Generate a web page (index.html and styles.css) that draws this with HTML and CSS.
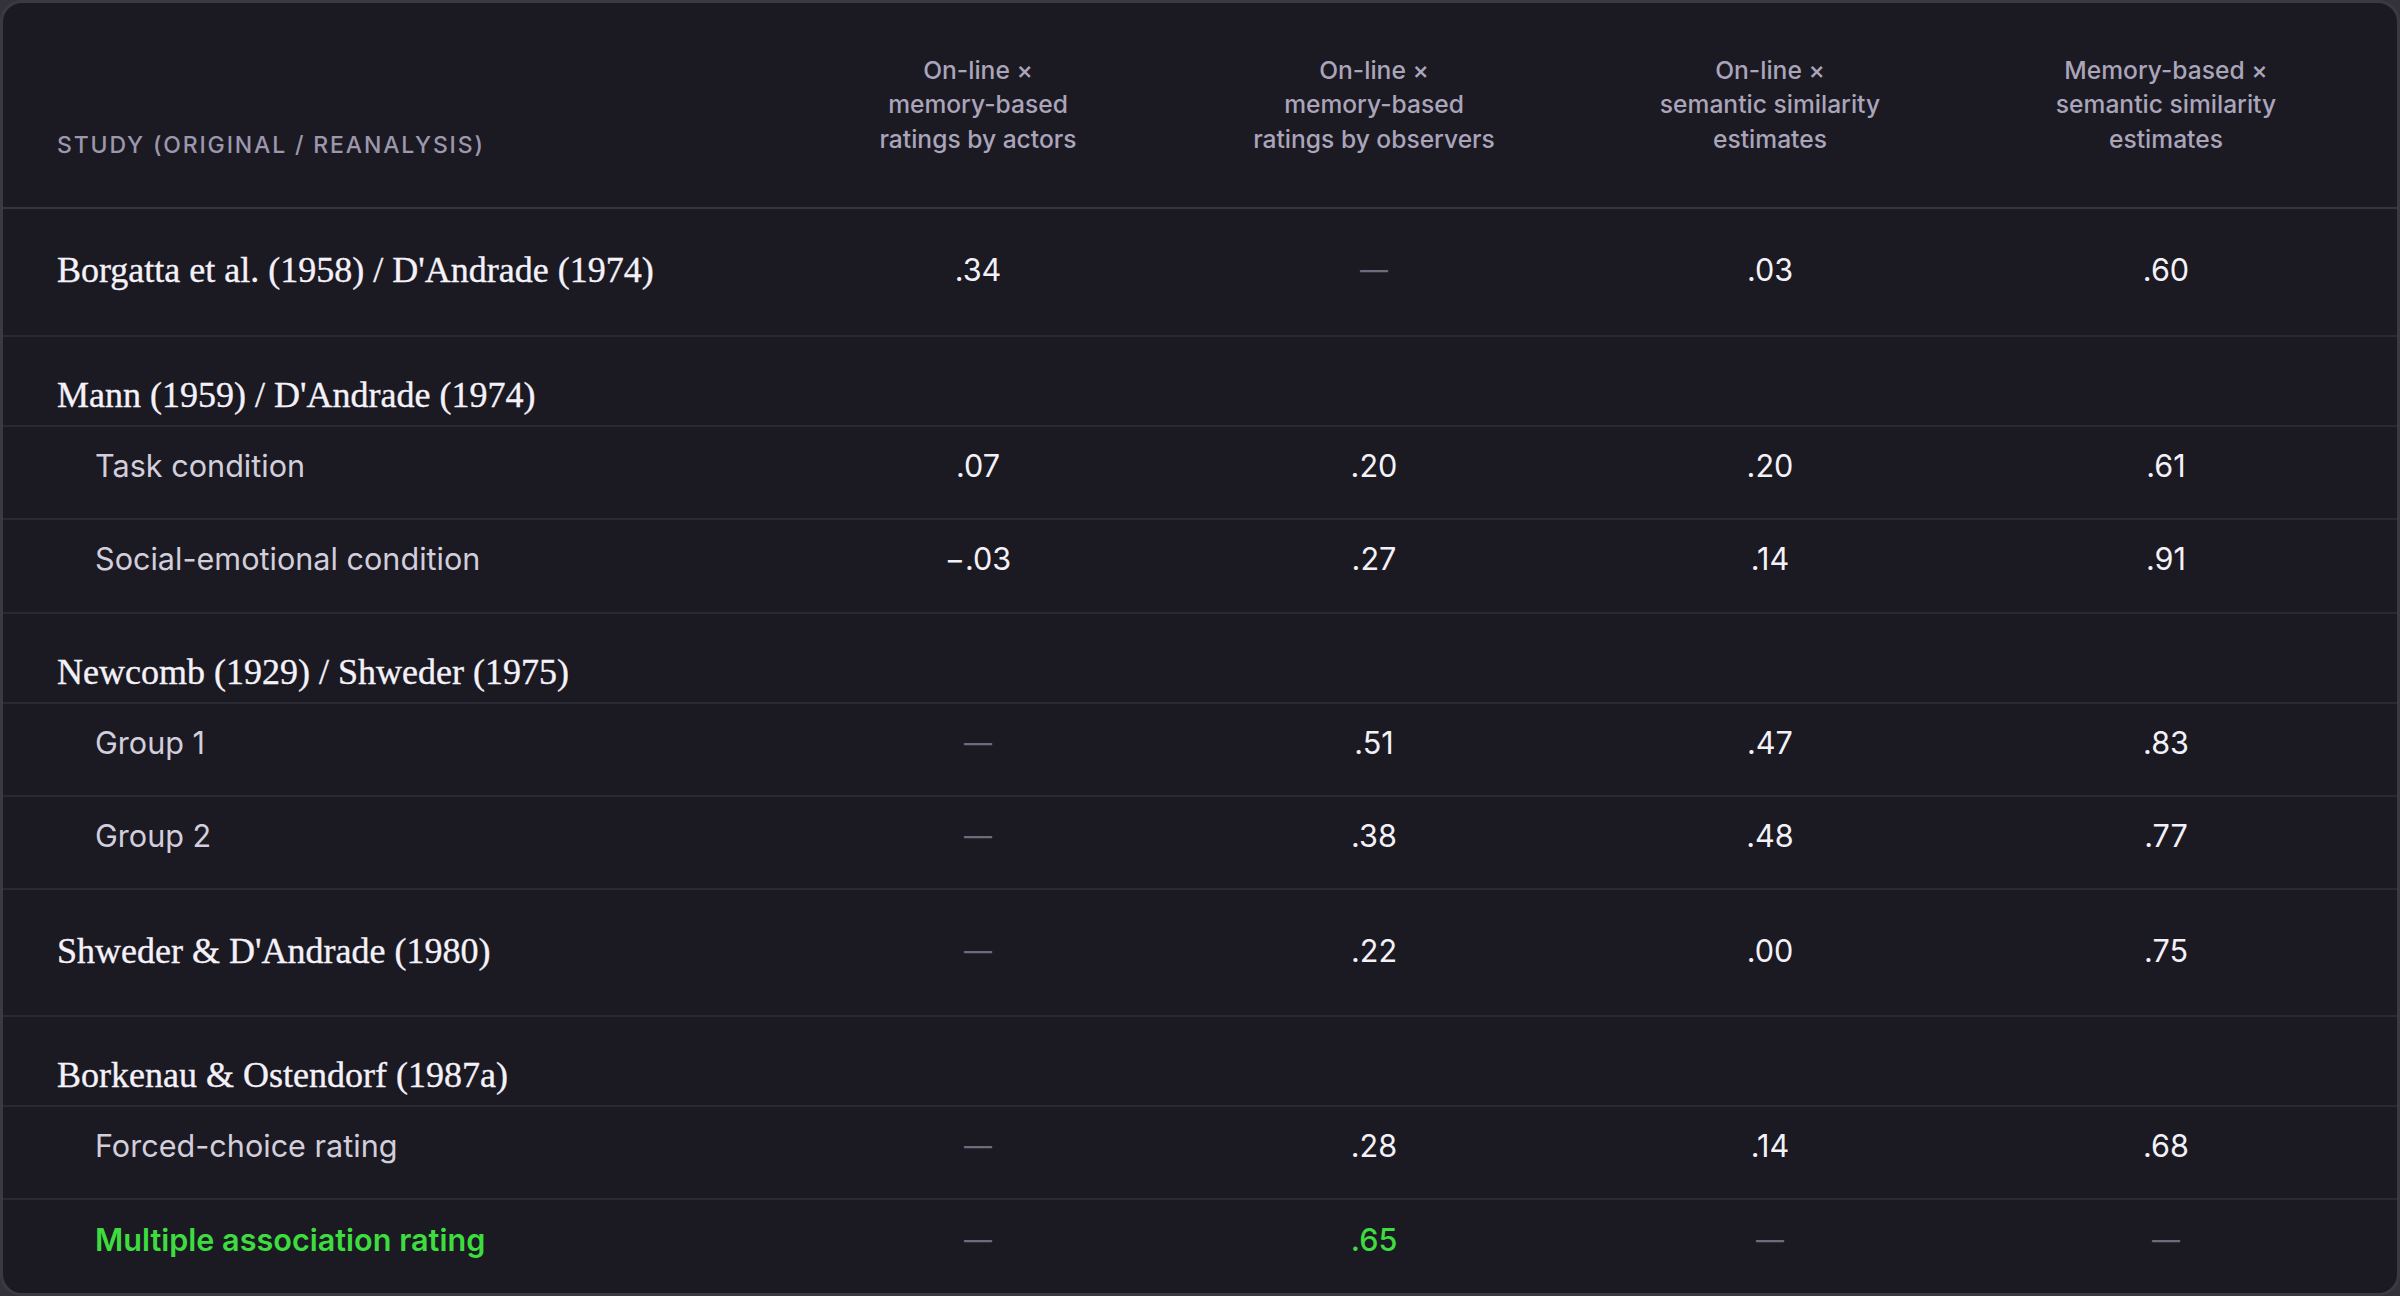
FILE: index.html
```html
<!DOCTYPE html>
<html lang="en">
<head>
<meta charset="utf-8">
<title>Study reanalysis correlations</title>
<link rel="stylesheet" href="styles.css">
</head>
<body>
<div class="card" role="table">
  <div class="row head" role="row">
    <div class="cell study-label" role="columnheader">Study (original / reanalysis)</div>
    <div class="cell col" role="columnheader">On-line ×<br>memory-based<br>ratings by actors</div>
    <div class="cell col" role="columnheader">On-line ×<br>memory-based<br>ratings by observers</div>
    <div class="cell col" role="columnheader">On-line ×<br>semantic similarity<br>estimates</div>
    <div class="cell col last" role="columnheader">Memory-based ×<br>semantic similarity<br>estimates</div>
  </div>

  <div class="row single" role="row">
    <div class="cell name">Borgatta et al. (1958) / D'Andrade (1974)</div>
    <div class="cell num">.34</div>
    <div class="cell num na">—</div>
    <div class="cell num">.03</div>
    <div class="cell num last">.60</div>
  </div>

  <div class="row group" role="row">
    <div class="cell name">Mann (1959) / D'Andrade (1974)</div>
  </div>
  <div class="row sub h93" role="row">
    <div class="cell label">Task condition</div>
    <div class="cell num">.07</div>
    <div class="cell num">.20</div>
    <div class="cell num">.20</div>
    <div class="cell num last">.61</div>
  </div>
  <div class="row sub h94" role="row">
    <div class="cell label">Social-emotional condition</div>
    <div class="cell num">−.03</div>
    <div class="cell num">.27</div>
    <div class="cell num">.14</div>
    <div class="cell num last">.91</div>
  </div>

  <div class="row group" role="row">
    <div class="cell name">Newcomb (1929) / Shweder (1975)</div>
  </div>
  <div class="row sub h93" role="row">
    <div class="cell label">Group 1</div>
    <div class="cell num na">—</div>
    <div class="cell num">.51</div>
    <div class="cell num">.47</div>
    <div class="cell num last">.83</div>
  </div>
  <div class="row sub h93" role="row">
    <div class="cell label">Group 2</div>
    <div class="cell num na">—</div>
    <div class="cell num">.38</div>
    <div class="cell num">.48</div>
    <div class="cell num last">.77</div>
  </div>

  <div class="row single short" role="row">
    <div class="cell name">Shweder &amp; D'Andrade (1980)</div>
    <div class="cell num na">—</div>
    <div class="cell num">.22</div>
    <div class="cell num">.00</div>
    <div class="cell num last">.75</div>
  </div>

  <div class="row group" role="row">
    <div class="cell name">Borkenau &amp; Ostendorf (1987a)</div>
  </div>
  <div class="row sub h93" role="row">
    <div class="cell label">Forced-choice rating</div>
    <div class="cell num na">—</div>
    <div class="cell num">.28</div>
    <div class="cell num">.14</div>
    <div class="cell num last">.68</div>
  </div>
  <div class="row sub final highlight" role="row">
    <div class="cell label">Multiple association rating</div>
    <div class="cell num na">—</div>
    <div class="cell num hl">.65</div>
    <div class="cell num na">—</div>
    <div class="cell num na last">—</div>
  </div>
</div>
</body>
</html>
```

FILE: styles.css
```css
html, body {
  margin: 0;
  padding: 0;
  background: #33323c;
}

body {
  width: 2400px;
  height: 1296px;
  overflow: hidden;
  font-family: "Inter", "Noto Sans", sans-serif;
}

.card {
  box-sizing: border-box;
  width: 2400px;
  height: 1296px;
  background: #1b1922;
  border: 3px solid #3a3944;
  border-radius: 22px;
  overflow: hidden;
  display: flex;
  flex-direction: column;
}

.row {
  box-sizing: border-box;
  display: grid;
  grid-template-columns: 777px 396px 396px 396px 1fr;
  align-items: center;
  border-bottom: 2px solid #2a2933;
  flex: none;
}

.cell {
  text-align: center;
  min-width: 0;
}

.cell.last { padding-right: 33px; }

/* header */
.row.head {
  height: 206px;
  align-items: end;
  padding-bottom: 51px;
  border-bottom-color: #35343f;
}

.head .col {
  font-size: 24.6px;
  line-height: 34.5px;
  font-weight: 500;
  color: #aaa5ba;
}

.head .study-label {
  text-align: left;
  padding-left: 54px;
  margin-bottom: -6px;
  font-size: 23px;
  line-height: 34px;
  font-weight: 500;
  letter-spacing: 1.85px;
  text-transform: uppercase;
  color: #9c97ad;
}

/* body rows */
.num {
  font-size: 30.6px;
  line-height: 40px;
  color: #f3f1f8;
}

.name {
  grid-column: 1 / -1;
  text-align: left;
  padding-left: 54px;
  font-family: "Liberation Serif", "Times New Roman", serif;
  font-size: 36px;
  line-height: 44px;
  color: #f4f1f8;
  -webkit-text-stroke: 0.35px #f4f1f8;
}

.single .name { grid-column: auto; }

.row.single {
  height: 128px;
  padding-bottom: 4px;
}
.row.single.short { height: 127px; }

.row.group {
  height: 90px;
  align-items: end;
  padding-bottom: 8px;
}

.row.sub { padding-bottom: 14px; }
.row.h93 { height: 93px; }
.row.h94 { height: 94px; }
.row.final {
  height: 93px;
  border-bottom: none;
}

.label {
  text-align: left;
  padding-left: 92px;
  font-size: 30.6px;
  line-height: 40px;
  color: #d2cedb;
}

.num.na {
  color: #6f6b7e;
  font-size: 28px;
}

.highlight .label {
  color: #3ddc3f;
  font-weight: 600;
}

.num.hl {
  color: #3ddc3f;
  font-weight: 500;
}
```
